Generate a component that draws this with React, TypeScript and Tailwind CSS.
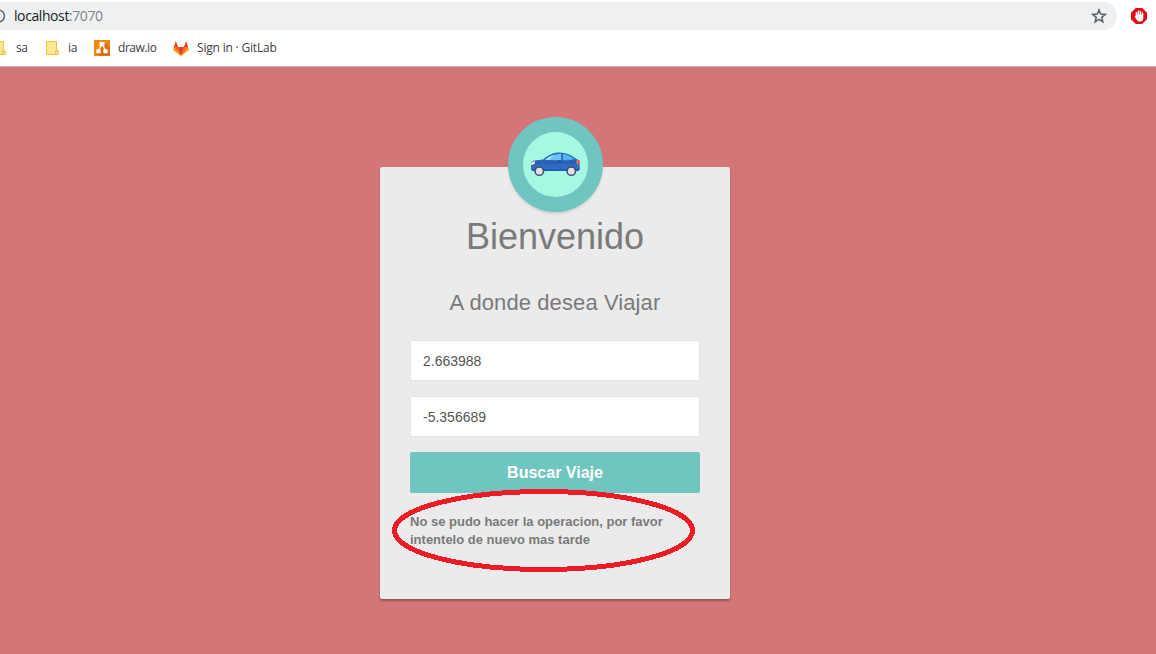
import React, { useState } from "react";

function FolderIcon() {
  return (
    <svg width="13" height="15" viewBox="0 0 13 15" className="block shrink-0">
      <path d="M0.5 0.5h10v9h1.5v4h-11.5z" fill="#ffe594" stroke="#e9c63f" />
      <path d="M9.5 13.5v-3.5h2.5v3.5z" fill="#ffe594" stroke="#e9c63f" />
    </svg>
  );
}

function DrawIoIcon() {
  return (
    <svg width="16" height="16" viewBox="0 0 16 16" className="block shrink-0">
      <rect width="16" height="16" fill="#f08705" />
      <path d="M10.5 2.5L16 8v8H6L2.5 13z" fill="#df6c0c" />
      <path d="M7.5 5L4.5 10.5M8.5 5l3 5.5" stroke="#fff" strokeWidth="1.3" />
      <rect x="5.5" y="2" width="5" height="4.3" rx="0.5" fill="#fff" />
      <rect x="2.3" y="9.3" width="4.4" height="4" rx="0.5" fill="#fff" />
      <rect x="9.3" y="9.3" width="4.4" height="4" rx="0.5" fill="#fff" />
    </svg>
  );
}

function GitLabIcon() {
  return (
    <svg width="16" height="15" viewBox="0 0 16 15" className="block shrink-0">
      <path d="M8 14.8L0.2 9.1 2.8 0.6 5.1 6h5.8l2.3-5.4 2.6 8.5z" fill="#fc6d26" />
      <path d="M8 14.8L5.1 6h5.8z" fill="#e24329" />
      <path d="M2.8 0.6L0.9 6h4.2zM13.2 0.6L15.1 6h-4.2z" fill="#e24329" />
      <path d="M0.9 6l-.7 3.1L8 14.8zM15.1 6l.7 3.1L8 14.8z" fill="#fca326" />
    </svg>
  );
}

function StarIcon() {
  return (
    <svg width="16" height="16" viewBox="0 0 16 16" className="block">
      <path
        d="M8 2l1.7 4 4.5.4-3.4 3 1 4.4L8 11.4l-3.8 2.4 1-4.4-3.4-3L6.3 6z"
        fill="none"
        stroke="#5f6368"
        strokeWidth="1.6"
      />
    </svg>
  );
}

function BlockerIcon() {
  return (
    <svg width="16" height="16" viewBox="0 0 16 16" className="block">
      <path d="M4.8 0h6.4L16 4.8v6.4L11.2 16H4.8L0 11.2V4.8z" fill="#e40d13" />
      <path
        d="M5.5 8.5V4.8M7.5 7.500V3.300M9.500 7.500V3.500M11.500 8.500V5"
        stroke="#fff"
        strokeWidth="1.5"
        strokeLinecap="round"
      />
      <path d="M4.800 6.800h7.400v3.700q0 3-3 3H8.300q-1.700 0-2.700-1.700L3.700 8.800q.3-.9 1.100-.5z" fill="#fff" />
    </svg>
  );
}

function CarIcon() {
  return (
    <svg width="51" height="25" viewBox="0 0 51 25" className="block">
      <path
        d="M1 11Q1.5 9 5 8.5L13 7.500Q20 1.500 27 0.600Q35-.1 40.500 3L47 7.300Q49.500 8 49.500 12L50 17.500 48 19H3Q.5 18.500 1 14z"
        fill="#2d6bc4"
      />
      <path d="M3 9.500Q7 8.300 14 8.300h31L47 7.500 49 9v3H2z" fill="#2860b7" />
      <path d="M15 7.900Q20 3.300 27 2.200Q29.500 1.900 31.200 2V8.300z" fill="#6cc4f5" />
      <path d="M15 7.900Q19 4.300 23.500 3L19.500 8z" fill="#a6e4fb" />
      <path d="M33 2.100Q38.500 2.500 44 7L39.500 8.300H33z" fill="#58b3ea" />
      <path d="M1.500 17.500h48l-1.500 1.500H3z" fill="#2558a8" />
      <path d="M1.300 10.200l3.900-.9-.8 2.700-3.400 1.200z" fill="#fff4d2" />
      <path d="M47.200 8l2.300.1.500 4.200h-2.500z" fill="#f64d55" />
      <path d="M46.700 8.300l.8 3.900" stroke="#ffb43b" strokeWidth="0.8" />
      <path d="M28.300 9.300h2.500" stroke="#173765" strokeWidth="1.300" />
      <circle cx="9.300" cy="19.200" r="4.900" fill="#465062" />
      <circle cx="9.300" cy="19.200" r="3.400" fill="#dde2ee" />
      <circle cx="41.300" cy="19.200" r="4.900" fill="#465062" />
      <circle cx="41.300" cy="19.200" r="3.400" fill="#dde2ee" />
    </svg>
  );
}

function BrowserBar() {
  return (
    <header className="flex h-[67px] flex-col border-b border-[#b3b5b6] bg-white pt-[2px] font-['Open_Sans',sans-serif]">
      <div className="flex h-7 items-center">
        <div className="flex h-7 w-[1117px] items-center rounded-r-full bg-[#eef0f2] pr-[10px]">
          <svg width="6" height="14" viewBox="0 0 6 14" className="block shrink-0">
            <circle cx="-1.5" cy="7" r="5.9" fill="none" stroke="#5f6368" strokeWidth="1.5" />
          </svg>
          <span className="ml-2 text-[14px] leading-7 tracking-[-0.41px] text-[#202124]">
            localhost<span className="text-[#80868b]">:7070</span>
          </span>
          <span className="ml-auto"><StarIcon /></span>
        </div>
        <span className="ml-[14px]"><BlockerIcon /></span>
      </div>
      <nav className="flex h-9 items-center text-[12px] text-[#3c4043]">
        <div className="flex w-[46px] items-center">
          <span className="-ml-[7px]"><FolderIcon /></span>
          <span className="ml-[10px] tracking-[-0.5px]">sa</span>
        </div>
        <div className="flex w-12 items-center">
          <FolderIcon />
          <span className="ml-[9px] tracking-[-0.3px]">ia</span>
        </div>
        <div className="flex w-[79px] items-center">
          <DrawIoIcon />
          <span className="ml-2 tracking-[-0.45px]">draw.io</span>
        </div>
        <div className="flex items-center">
          <GitLabIcon />
          <span className="ml-2 whitespace-nowrap tracking-[-0.19px]">Sign in · GitLab</span>
        </div>
      </nav>
    </header>
  );
}

const inputClass =
  "block h-[41px] w-full rounded-[2px] border border-[#e3e3e3] bg-white px-3 text-[14px] text-[#555555] outline-none";

export default function App() {
  const [latitude, setLatitude] = useState("2.663988");
  const [longitude, setLongitude] = useState("-5.356689");
  return (
    <div className="flex h-[654px] w-[1156px] flex-col overflow-hidden bg-[#d47677] font-['Liberation_Sans',Arial,sans-serif]">
      <BrowserBar />
      <main className="pl-[380px] pt-[100px]">
        <section className="relative flow-root h-[432px] w-[350px] rounded-[2px] bg-[#ebebeb] px-[30px] text-[#7a7a7a] shadow-[0_2px_2px_rgba(0,0,0,0.3)]">
          <div className="-mt-[50px] ml-[98px] flex h-[95px] w-[95px] items-center justify-center rounded-full bg-[#70c5c0] shadow-[0_2px_2px_rgba(0,0,0,0.1)]">
            <div className="flex h-[65px] w-[65px] items-center justify-center rounded-full bg-[#a5f8e1]">
              <CarIcon />
            </div>
          </div>
          <h1 className="text-center text-[36px] leading-[50px]">Bienvenido</h1>
          <h2 className="mt-[25px] text-center text-[22px] leading-8 tracking-[0.1px]">A donde desea Viajar</h2>
          <form className="mt-[21px]" onSubmit={(e) => e.preventDefault()}>
            <input className={inputClass} value={latitude} onChange={(e) => setLatitude(e.target.value)} />
            <input
              className={`${inputClass} mt-[15px]`}
              value={longitude}
              onChange={(e) => setLongitude(e.target.value)}
            />
            <button className="mt-[15px] block h-[41px] w-full rounded-[2px] bg-[#70c5c0] text-[16px] font-bold text-white">
              Buscar Viaje
            </button>
          </form>
          <p className="mt-5 text-[13px] font-bold leading-[18px]">
            No se pudo hacer la operacion, por favor intentelo de nuevo mas tarde
          </p>
          <svg
            width="304"
            height="84"
            viewBox="0 0 304 84"
            shapeRendering="crispEdges"
            className="pointer-events-none absolute left-[12px] top-[322px]"
          >
            <ellipse cx="151.5" cy="41.5" rx="149" ry="39" fill="none" stroke="#ed1c24" strokeWidth="5" />
          </svg>
        </section>
      </main>
    </div>
  );
}
